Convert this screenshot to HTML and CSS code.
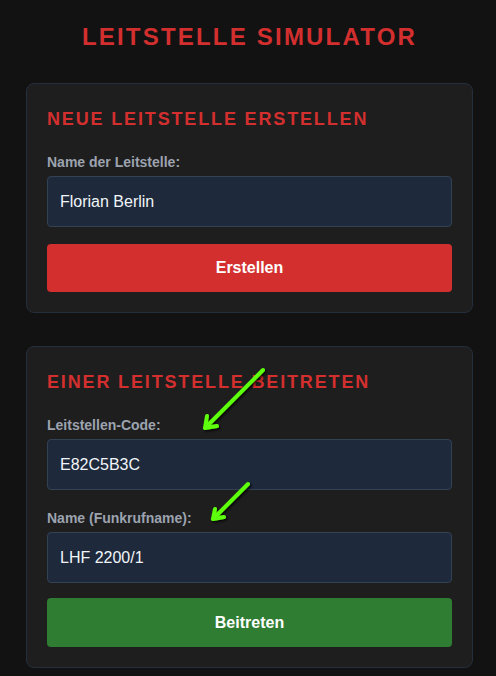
FILE: index.html
```html
<!DOCTYPE html>
<html lang="de">
<head>
<meta charset="utf-8">
<title>Leitstelle Simulator</title>
<link rel="stylesheet" href="styles.css">
</head>
<body>
<main class="page">
  <h1 class="title">LEITSTELLE SIMULATOR</h1>

  <section class="card">
    <h2 class="card-title">NEUE LEITSTELLE ERSTELLEN</h2>
    <div class="field">
      <label class="label">Name der Leitstelle:</label>
      <div class="input">Florian Berlin</div>
    </div>
    <button class="btn btn-red">Erstellen</button>
  </section>

  <section class="card">
    <h2 class="card-title">EINER LEITSTELLE BEITRETEN</h2>
    <div class="field">
      <label class="label">Leitstellen-Code:</label>
      <div class="input">E82C5B3C</div>
    </div>
    <div class="field field-last">
      <label class="label">Name (Funkrufname):</label>
      <div class="input">LHF 2200/1</div>
    </div>
    <button class="btn btn-green">Beitreten</button>
  </section>
</main>

<svg class="annotations" width="496" height="676" viewBox="0 0 496 676">
  <defs>
    <filter id="sh" x="-20%" y="-20%" width="140%" height="140%">
      <feDropShadow dx="1.5" dy="1.5" stdDeviation="1" flood-color="#000" flood-opacity="0.8"/>
    </filter>
  </defs>
  <g fill="none" stroke="#5dff0a" stroke-width="4" stroke-linecap="round" stroke-linejoin="round" filter="url(#sh)">
    <path d="M263 370 L205 428 M205 428 L207 416 M205 428 L217 426"/>
    <path d="M248 484 L213 519 M213 519 L215 509 M213 519 L224 517"/>
  </g>
</svg>
</body>
</html>
```

FILE: styles.css
```css
html, body {
  margin: 0;
  padding: 0;
  background: #121212;
}

body {
  font-family: "Liberation Sans", Arial, sans-serif;
  color: #e8e8e8;
  position: relative;
  min-height: 676px;
}

.page {
  width: 447px;
  padding: 23px 0 0 26px;
  box-sizing: content-box;
  display: flex;
  flex-direction: column;
}

.title {
  margin: 0 0 32px;
  font-size: 24px;
  font-weight: 700;
  letter-spacing: 2.2px;
  line-height: 28px;
  color: #d32f2f;
  text-align: center;
}

.card {
  background: #1e1e1e;
  border: 1px solid #252e3b;
  border-radius: 8px;
  padding: 24px 20px 20px;
  margin-bottom: 33px;
  display: flex;
  flex-direction: column;
}

.card-title {
  margin: 0 0 24px;
  font-size: 18px;
  line-height: 22px;
  font-weight: 700;
  letter-spacing: 1.85px;
  color: #d32f2f;
}

.field {
  display: flex;
  flex-direction: column;
  margin-bottom: 17px;
}

.field + .field {
  margin-top: 3px;
}

.field-last {
  margin-bottom: 15px;
}

.label {
  font-size: 14px;
  line-height: 16px;
  font-weight: 700;
  color: #9ca3af;
  margin-bottom: 6px;
}

.input {
  height: 51px;
  box-sizing: border-box;
  background: #1e293b;
  border: 1px solid #334155;
  border-radius: 4px;
  padding: 0 12px;
  display: flex;
  align-items: center;
  font-size: 16px;
  color: #f1f5f9;
}

.btn {
  display: block;
  width: 100%;
  height: 48px;
  border: none;
  border-radius: 4px;
  font-family: "Liberation Sans", Arial, sans-serif;
  font-size: 16px;
  font-weight: 700;
  color: #ffffff;
}

.btn-red {
  background: #d32f2f;
}

.btn-green {
  background: #2e7d32;
  height: 49px;
}

.annotations {
  position: absolute;
  left: 0;
  top: 0;
  pointer-events: none;
}
```
